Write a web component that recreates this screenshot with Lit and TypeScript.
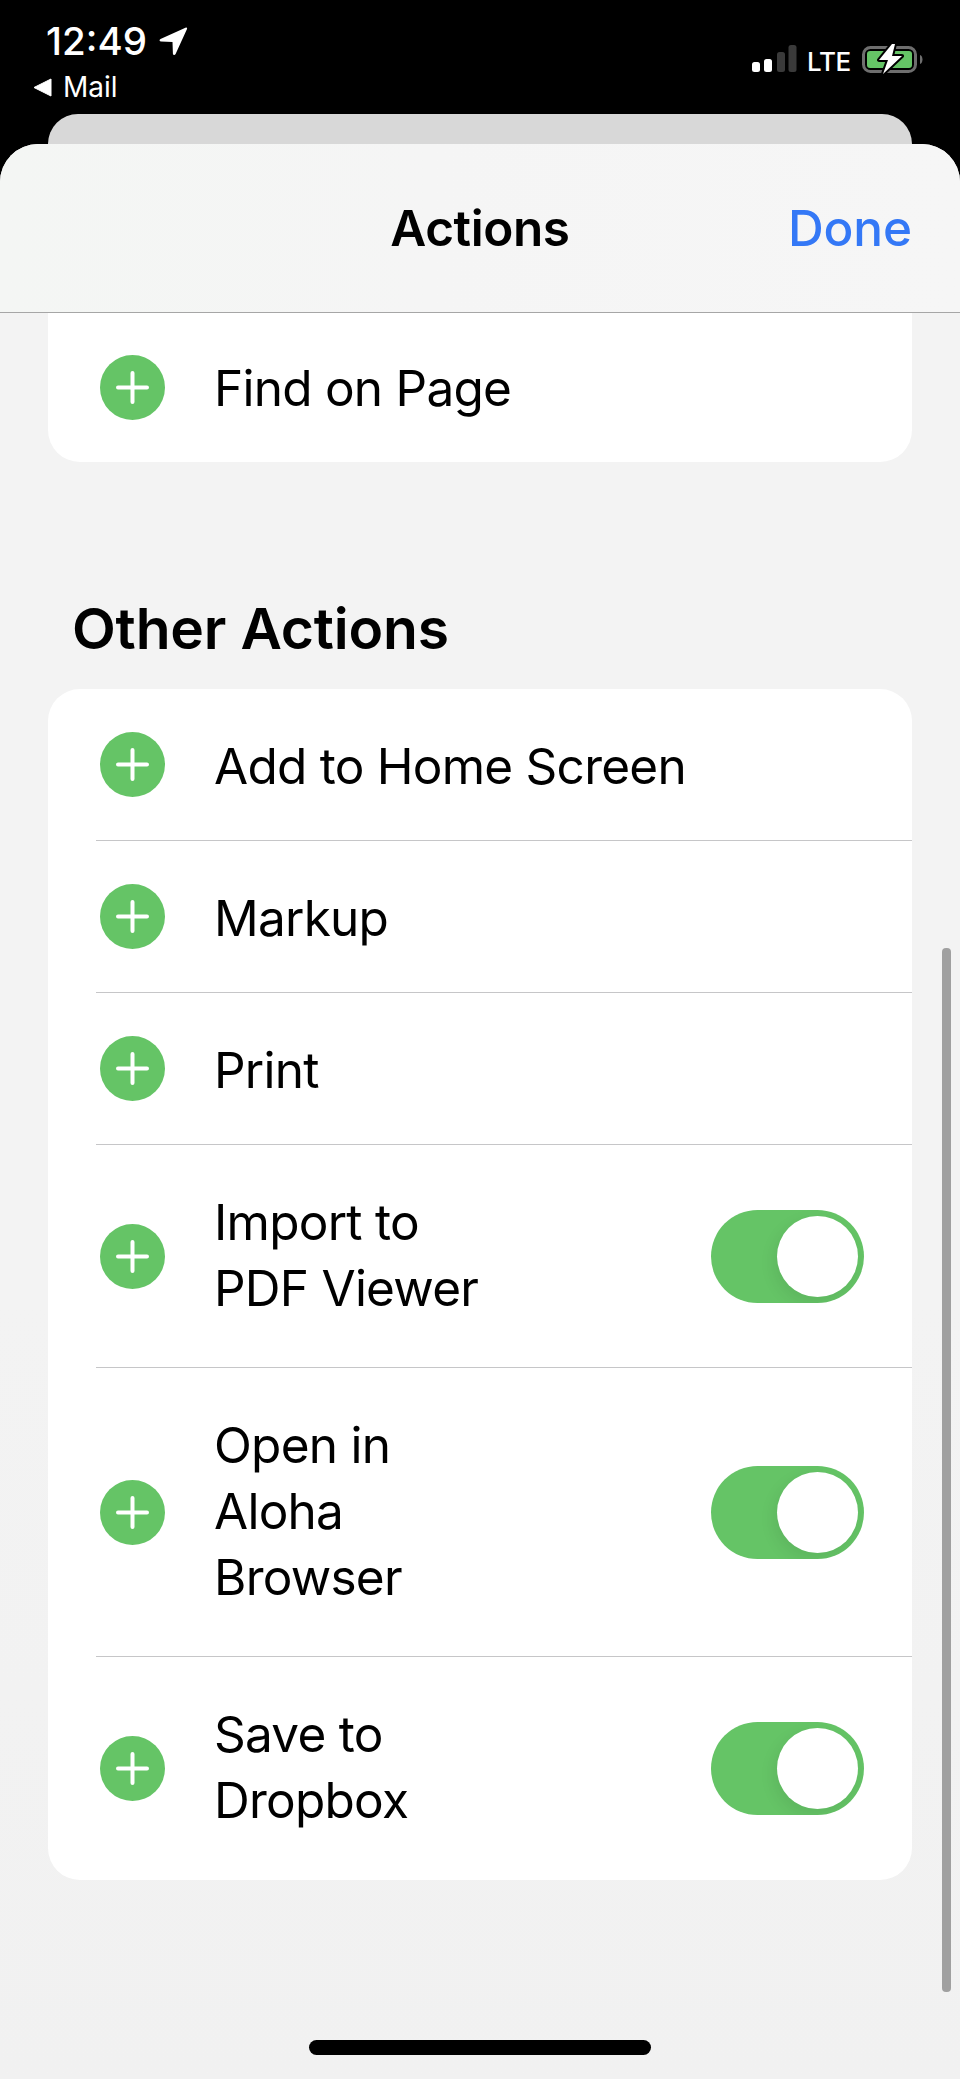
import { LitElement, css, html } from "lit";
import { customElement } from "lit/decorators.js";

interface ActionRow {
  lines: string[];
  toggle?: boolean;
}

const OTHER_ACTIONS: ActionRow[] = [
  { lines: ["Add to Home Screen"] },
  { lines: ["Markup"] },
  { lines: ["Print"] },
  { lines: ["Import to", "PDF Viewer"], toggle: true },
  { lines: ["Open in", "Aloha", "Browser"], toggle: true },
  { lines: ["Save to", "Dropbox"], toggle: true },
];

@customElement("app-root")
export class AppRoot extends LitElement {
  static styles = css`
    :host {
      display: block;
      width: 960px;
      height: 2079px;
      background: #000;
      overflow: hidden;
      font-family: Inter, "Liberation Sans", sans-serif;
      color: #000;
    }

    .status {
      height: 114px;
      box-sizing: border-box;
      padding: 21px 37px 0 33px;
      display: flex;
      justify-content: space-between;
      color: #fff;
    }

    .status-left {
      display: flex;
      flex-direction: column;
    }

    .time-line {
      display: flex;
      align-items: center;
      gap: 12px;
      padding-left: 13px;
      font-size: 38.5px;
      line-height: 40px;
      font-weight: 500;
    }

    .back-line {
      display: flex;
      align-items: center;
      gap: 11px;
      margin-top: 10px;
      font-size: 28px;
      line-height: 32px;
    }

    .status-right {
      display: flex;
      align-items: flex-start;
      padding-top: 22px;
    }

    .signal {
      margin: 2px 10px 0 0;
    }

    .lte {
      margin: 5px 9px 0 0;
      width: 43px;
      font-size: 26px;
      line-height: 28px;
      letter-spacing: -0.3px;
      font-weight: 500;
    }

    .behind {
      height: 30px;
      margin: 0 48px;
      background: #d8d8d8;
      border-radius: 32px 32px 0 0;
    }

    .sheet {
      position: relative;
      height: 1935px;
      background: linear-gradient(180deg, #f3f3f3 60%, #f1f1f1);
      border-radius: 38px 38px 0 0;
      overflow: hidden;
    }

    .header {
      height: 168px;
      border-bottom: 1px solid #a6a6a6;
      background: linear-gradient(90deg, #f4f6f4, #f5f5f5 45%, #f6f6f6);
      display: grid;
      grid-template-columns: 1fr auto 1fr;
      align-items: center;
      padding: 0 48px;
      font-size: 49.5px;
      letter-spacing: -0.4px;
    }

    .title {
      font-weight: 600;
    }

    .done {
      justify-self: end;
      color: #3478f6;
      font-weight: 500;
      letter-spacing: -0.1px;
    }

    .card {
      margin: 0 48px;
      background: #fff;
      border-radius: 32px;
    }

    .card.cut {
      border-radius: 0 0 32px 32px;
    }

    .card.cut .row {
      min-height: 149px;
    }

    .card.cut .row .text {
      margin-top: 0;
    }

    h2 {
      margin: 0;
      height: 227px;
      box-sizing: border-box;
      padding: 133px 0 0 72px;
      font-size: 57px;
      line-height: 68px;
      font-weight: 600;
      letter-spacing: -0.2px;
    }

    .row {
      display: flex;
      align-items: center;
      box-sizing: border-box;
      min-height: 152px;
      margin-left: 48px;
      padding-left: 4px;
      border-top: 1px solid #c6c6c8;
      font-size: 49.5px;
      line-height: 66px;
      letter-spacing: -0.75px;
    }

    .row:first-child {
      min-height: 151px;
      border-top: none;
    }

    .row .text {
      margin-top: 2px;
    }

    .row.tall {
      padding-top: 44px;
      padding-bottom: 44px;
    }

    .row.tall .text {
      margin-top: 0;
      margin-bottom: 2px;
    }

    .row.tall:last-child {
      padding-bottom: 45px;
    }

    .plus {
      flex: none;
      width: 65px;
      height: 65px;
      margin-right: 49px;
    }

    .text {
      flex: 1;
    }

    .text div {
      white-space: nowrap;
    }

    .toggle {
      position: relative;
      flex: none;
      width: 153px;
      height: 93px;
      margin-right: 48px;
      border-radius: 47px;
      background: #65c466;
      overflow: hidden;
    }

    .knob {
      position: absolute;
      top: 6px;
      right: 6px;
      width: 81px;
      height: 81px;
      border-radius: 50%;
      background: #fff;
      box-shadow: -3px 6px 16px rgba(0, 0, 0, 0.08);
    }

    .scrollbar {
      position: absolute;
      left: 942px;
      top: 804px;
      width: 9px;
      height: 1044px;
      border-radius: 4px;
      background: #a0a0a0;
    }

    .home {
      position: absolute;
      left: 309px;
      top: 1896px;
      width: 342px;
      height: 15px;
      border-radius: 8px;
      background: #000;
    }
  `;

  private plusIcon() {
    return html`<svg class="plus" viewBox="0 0 65 65">
      <circle cx="32.5" cy="32.5" r="32.5" fill="#65c466" />
      <path d="M32.500 18v29M18 32.500h29" stroke="#fff" stroke-width="4" stroke-linecap="round" />
    </svg>`;
  }

  private renderRow(row: ActionRow) {
    return html`<div class="row ${row.lines.length > 1 ? "tall" : ""}">
      ${this.plusIcon()}
      <div class="text">${row.lines.map((l) => html`<div>${l}</div>`)}</div>
      ${row.toggle ? html`<div class="toggle"><div class="knob"></div></div>` : ""}
    </div>`;
  }

  render() {
    return html`
      <div class="status">
        <div class="status-left">
          <div class="time-line">
            <span>12:49</span>
            <svg width="29" height="29" viewBox="0 0 29 29">
              <path
                d="M27 .5 1.500 12c-1.500.7-1.200 2.600.6 2.600l11.400.5.4 11.500c.1 1.800 2 2 2.700.5L28 2c.4-1-.2-1.900-1-1.500z"
                fill="#fff"
              />
            </svg>
          </div>
          <div class="back-line">
            <svg width="19" height="19" viewBox="0 0 19 19">
              <path d="M18 1v17L1 9.500z" fill="#fff" stroke="#fff" stroke-linejoin="round" />
            </svg>
            <span>Mail</span>
          </div>
        </div>
        <div class="status-right">
          <svg class="signal" width="45" height="27" viewBox="0 0 45 27">
            <rect x="0" y="17" width="8" height="10" rx="2.500" fill="#fff" />
            <rect x="12" y="14" width="8" height="13" rx="2.500" fill="#fff" />
            <rect x="25" y="7" width="8" height="20" rx="2.500" fill="#3a3a3a" />
            <rect x="36.500" y="0" width="8" height="27" rx="2.500" fill="#3a3a3a" />
          </svg>
          <span class="lte">LTE</span>
          <svg width="64" height="32" viewBox="0 0 64 32">
            <rect x="4.500" y="4.500" width="52" height="24" rx="7" fill="none" stroke="#6e6e6e" stroke-width="3" />
            <rect x="8" y="8" width="45" height="17" rx="3" fill="#65c466" />
            <path d="M61 12c1.500.5 2.500 2.300 2.500 4.500s-1 4-2.500 4.500z" fill="#6e6e6e" />
            <path
              d="M33 1 20 17h9l-5 14 19-18H33l3-12z"
              fill="#fff"
              stroke="#000"
              stroke-width="4"
              stroke-linejoin="round"
              paint-order="stroke"
            />
          </svg>
        </div>
      </div>
      <div class="behind"></div>
      <div class="sheet">
        <div class="header">
          <span></span>
          <span class="title">Actions</span>
          <span class="done">Done</span>
        </div>
        <div class="card cut">${this.renderRow({ lines: ["Find on Page"] })}</div>
        <h2>Other Actions</h2>
        <div class="card">${OTHER_ACTIONS.map((r) => this.renderRow(r))}</div>
        <div class="scrollbar"></div>
        <div class="home"></div>
      </div>
    `;
  }
}
